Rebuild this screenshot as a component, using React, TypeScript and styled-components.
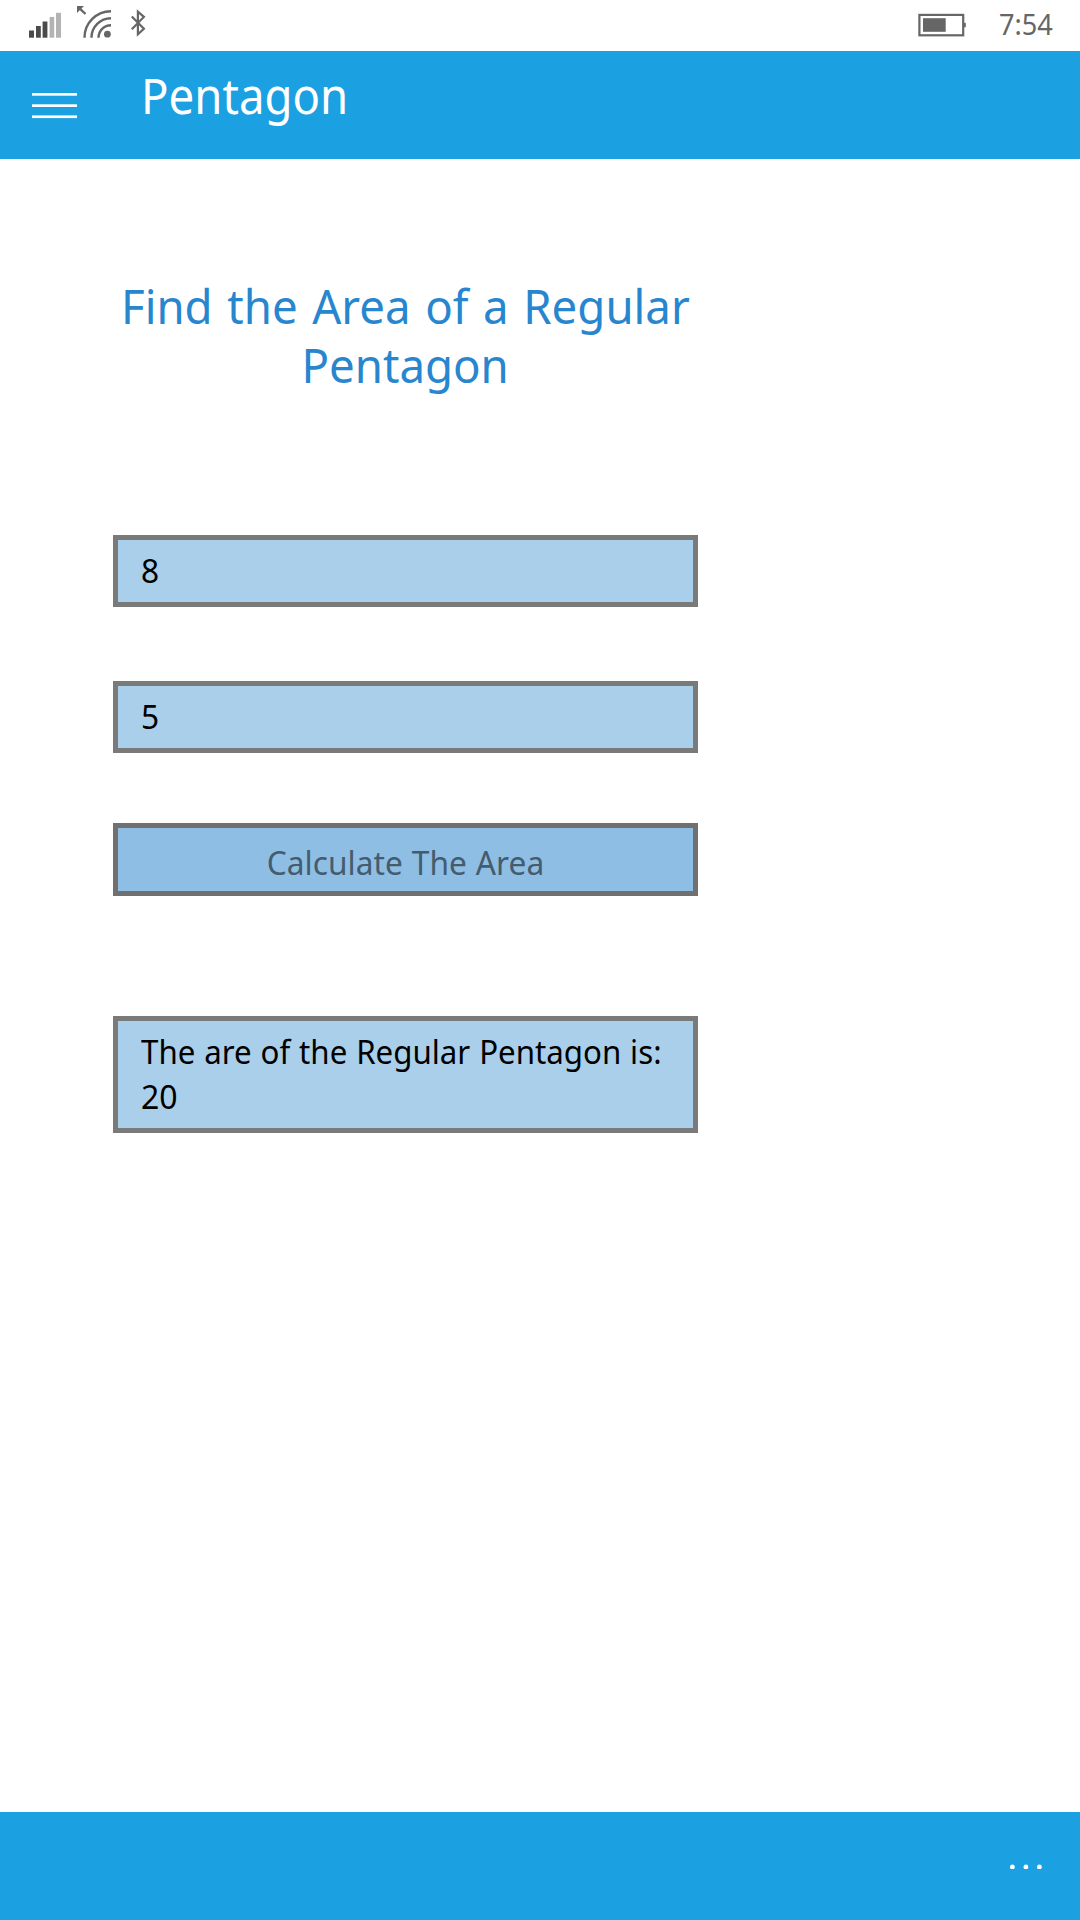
import React from "react";
import styled, { createGlobalStyle } from "styled-components";

const GlobalStyle = createGlobalStyle`
  body { margin: 0; background: #fff; }
  * { box-sizing: border-box; }
`;

const Screen = styled.div`
  width: 1080px;
  height: 1920px;
  display: flex;
  flex-direction: column;
  background: #fff;
  font-family: "Noto Sans", "Open Sans", sans-serif;
`;

const StatusBar = styled.header`
  height: 51px;
  display: flex;
  justify-content: space-between;
  color: #666;
`;

const StatusGroup = styled.div`
  display: flex;
`;

const Clock = styled.time`
  width: 81px;
  margin-top: 4px;
  font-size: 29px;
  line-height: 40px;
  transform: scaleX(0.935);
  transform-origin: left;
`;

const TitleBar = styled.div`
  height: 108px;
  display: flex;
  align-items: flex-start;
  padding: 12px 0 0 32px;
  background: #1ba0e2;
  color: #fff;
`;

const MenuButton = styled.button`
  width: 45px;
  height: 27px;
  margin: 30px 64px 0 0;
  padding: 0;
  border: 0;
  background: none;
  svg { display: block; }
`;

const Title = styled.h1`
  margin: 0;
  font-size: 49px;
  font-weight: 400;
  line-height: 65px;
  transform: scaleX(0.93);
  transform-origin: left;
`;

const Content = styled.main`
  flex: 1;
  width: 585px;
  margin-left: 113px;
  padding-top: 117px;
  display: flex;
  flex-direction: column;
`;

const Heading = styled.h2`
  margin: 0 0 141px;
  font-size: 48px;
  font-weight: 400;
  line-height: 59px;
  word-spacing: 2.9px;
  color: #2886cf;
  display: flex;
  flex-direction: column;
  align-items: center;
`;

const Line = styled.span<{ $scale: number }>`
  display: block;
  white-space: pre;
  transform: scaleX(${(p) => p.$scale});
`;

const Field = styled.div<{ $height: number; $gap: number }>`
  height: ${(p) => p.$height}px;
  margin-bottom: ${(p) => p.$gap}px;
  padding: 9px 0 0 23.4px;
  border: 5px solid #7a7a7a;
  background: #aacfea;
  color: #000;
  font-size: 33px;
  line-height: 44.7px;
  word-spacing: 0.8px;
  ${Line} { transform-origin: left; }
`;

const ActionButton = styled.button`
  height: 73px;
  margin: 0 0 120px;
  padding: 12px 0 0;
  display: flex;
  justify-content: center;
  align-items: flex-start;
  border: 5px solid #707070;
  background: #8fbee4;
  color: #445c6e;
  font: 400 33px/45px "Noto Sans", "Open Sans", sans-serif;
  word-spacing: 0.8px;
`;

const CommandBar = styled.footer`
  height: 108px;
  display: flex;
  justify-content: flex-end;
  align-items: center;
  padding-right: 37px;
  background: #1ba0e2;
`;

const SystemIcons = () => (
  <svg width="160" height="51" viewBox="0 0 160 51" fill="none">
    <g fill="#4a4a4a">
      <rect x="29" y="30.5" width="5" height="7.2" />
      <rect x="36" y="26" width="4.8" height="11.7" />
      <rect x="42.6" y="21.5" width="4.8" height="16.2" />
    </g>
    <g fill="#b3b3b3">
      <rect x="49.6" y="17" width="4.6" height="20.7" />
      <rect x="56" y="12.8" width="5" height="24.9" />
    </g>
    <g stroke="#666" strokeWidth="2.4">
      <path d="M111 11.2A26.5 26.5 0 0 0 84.5 37.7" />
      <path d="M111 18.2A19.5 19.5 0 0 0 91.5 37.7" />
      <path d="M111 25.2A12.5 12.5 0 0 0 98.5 37.7" />
      <path d="M78.5 7.3L85.5 14" />
      <path d="M131.8 16.5L143.9 28.7L137.9 34.2V11.7L143.9 16.9L131.8 29.2" strokeWidth="2.2" />
    </g>
    <path d="M77 6H84L77 13Z" fill="#666" />
    <circle cx="107.4" cy="34.2" r="3.4" fill="#666" />
  </svg>
);

const Battery = () => (
  <svg width="81" height="51" viewBox="918 0 81 51">
    <rect x="919.4" y="14.9" width="43.8" height="20.4" fill="none" stroke="#666" strokeWidth="2.2" />
    <rect x="923" y="18.2" width="22.7" height="13.6" fill="#666" />
    <rect x="963.5" y="22.8" width="2.3" height="4.4" fill="#666" />
  </svg>
);

export default function App() {
  return (
    <>
      <GlobalStyle />
      <Screen>
        <StatusBar>
          <SystemIcons />
          <StatusGroup>
            <Battery />
            <Clock>7:54</Clock>
          </StatusGroup>
        </StatusBar>
        <TitleBar>
          <MenuButton aria-label="Menu">
            <svg width="45" height="27" fill="#fff">
              <rect y="0" width="45" height="2.7" />
              <rect y="11.3" width="45" height="2.7" />
              <rect y="22.4" width="45" height="2.7" />
            </svg>
          </MenuButton>
          <Title>Pentagon</Title>
        </TitleBar>
        <Content>
          <Heading>
            <Line $scale={0.95}>Find the Area of a Regular</Line>
            <Line $scale={0.95}>Pentagon</Line>
          </Heading>
          <Field $height={72} $gap={74}><Line $scale={0.96}>8</Line></Field>
          <Field $height={72} $gap={70}><Line $scale={0.96}>5</Line></Field>
          <ActionButton><Line $scale={0.96}>Calculate The Area</Line></ActionButton>
          <Field $height={117} $gap={0}>
            <Line $scale={0.947}>The are of the Regular Pentagon is:</Line>
            <Line $scale={0.97}>20</Line>
          </Field>
        </Content>
        <CommandBar>
          <svg width="33" height="6" fill="#fff">
            <circle cx="2.4" cy="4" r="2.4" />
            <circle cx="15.9" cy="4" r="2.4" />
            <circle cx="29.4" cy="4" r="2.4" />
          </svg>
        </CommandBar>
      </Screen>
    </>
  );
}
